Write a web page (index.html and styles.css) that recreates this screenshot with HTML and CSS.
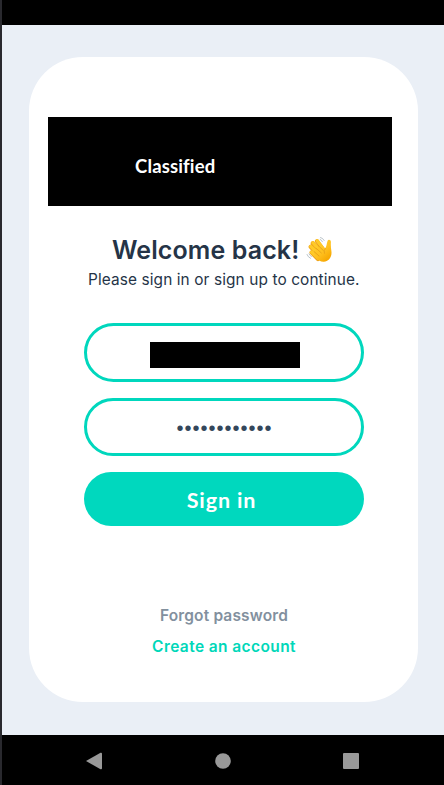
FILE: index.html
```html
<!DOCTYPE html>
<html lang="en">
<head>
<meta charset="utf-8">
<title>Sign in</title>
<link rel="stylesheet" href="styles.css">
</head>
<body>
<div class="device">
  <header class="status-bar"></header>
  <main class="screen">
    <section class="card">
      <div class="banner"><span>Classified</span></div>
      <h1 class="title"><span class="title-text">Welcome back!</span>
        <svg class="wave" viewBox="0 0 28 28" aria-hidden="true">
          <defs><linearGradient id="skin" x1="0" y1="0" x2="0.7" y2="1"><stop offset="0" stop-color="#ffd02c"/><stop offset="0.6" stop-color="#ffc120"/><stop offset="1" stop-color="#f6a600"/></linearGradient></defs>
          <path d="M12 23 5.6 16.5M13 20 4.7 10.8M15 17 6.8 7.2M18 14.5 11 5.2" stroke="#efa41c" stroke-width="4.2" stroke-linecap="round"/>
          <path d="M12.2 22 5.5 16M13.5 19 4.8 10.4M15.5 16.5 7 6.7M18 14 11.3 4.8" stroke="#ffca28" stroke-width="3.2" stroke-linecap="round"/>
          <path d="M8 17 13 10 19 12.5C20.7 10.5 20.5 8.2 21.6 4.8 22.3 2.9 25.1 3.7 24.9 6.2 24.7 9 24.9 12 25.4 15.2 26.2 20.6 22.8 25.6 17.9 25.8 14.5 26 12.4 24.3 8.8 20.7Z" fill="url(#skin)"/>
          <path d="M8.3 15.8 13 20M10 12.2 15.4 17M12.1 9.4 17.4 14.6M19.3 12.5Q17.4 14.4 18.4 17.3" fill="none" stroke="#e59d16" stroke-width=".8" stroke-linecap="round"/>
          <path d="M1 18.5Q1.8 21 4.5 22.3M3 17.8Q3.8 19.7 5.4 20.5M14.5 1.5Q16.8 1.8 18.2 4.5M14.2 3.4Q15.7 4 16.4 5.7" fill="none" stroke="#a8b5bd" stroke-width=".8" stroke-linecap="round"/>
        </svg>
      </h1>
      <p class="subtitle">Please sign in or sign up to continue.</p>
      <form class="form">
        <div class="field"><span class="redacted"></span></div>
        <div class="field"><span class="dots">••••••••••••</span></div>
        <button class="submit" type="button"><span>Sign in</span></button>
      </form>
      <nav class="links">
        <a class="forgot">Forgot password</a>
        <a class="create">Create an account</a>
      </nav>
    </section>
  </main>
  <footer class="nav-bar">
    <svg class="nav-icon" viewBox="0 0 18 18"><path d="M1 9 15.5 .8Q17 .3 17 1.7V16.3Q17 17.7 15.5 17.2Z"/></svg>
    <svg class="nav-icon" viewBox="0 0 18 18"><circle cx="9" cy="9" r="7.8"/></svg>
    <svg class="nav-icon" viewBox="0 0 18 18"><rect x="1" y="1" width="16" height="16" rx="1"/></svg>
  </footer>
</div>
</body>
</html>
```
FILE: styles.css
```css
* { box-sizing: border-box; }
body { margin: 0; background: #29292e; font-family: Inter, "Liberation Sans", sans-serif; }
.device { margin-left: 2px; height: 785px; display: flex; flex-direction: column; overflow: hidden; }
.status-bar { height: 25px; background: #000; }
.screen { height: 710px; padding: 32px 26px 33px 27px; background: #eaeff6; }
.card { height: 645px; padding: 60px 26px 0 19px; border-radius: 54px; background: #fff; color: #253447; }
.banner { height: 89px; background: #000; color: #fff; padding: 37px 0 0 87px; font: 700 18.5px/25px Lato, sans-serif; letter-spacing: .15px; font-variant-ligatures: none; }
.title { margin: 28px 0 0 64px; height: 32px; display: flex; align-items: center; gap: 7px; font-size: 25px; font-weight: 600; line-height: 32px; letter-spacing: .1px; white-space: nowrap; }
.title-text { width: 187px; }
.wave { width: 28px; height: 28px; flex: none; }
.subtitle { margin: 1px 0 0 40px; font-size: 15.4px; font-weight: 400; line-height: 25px; letter-spacing: .11px; white-space: nowrap; }
.form { width: 280px; margin: 31px 0 0 36px; display: flex; flex-direction: column; gap: 16px; }
.field { height: 58px; border: 3px solid #00d7bd; border-radius: 29px; display: flex; align-items: center; justify-content: center; }
.field:first-child { height: 59px; border-radius: 30px; }
.redacted { width: 150px; height: 26px; margin: 4px 0 0 2px; background: #000; }
.dots { font: 20px/24px "Liberation Sans", sans-serif; letter-spacing: 1px; color: #34475b; padding: 2px 0 0 1px; }
.submit { height: 54px; border: 0; border-radius: 27px; background: #00d8be; color: #fff; padding: 2px 5px 0 0; font: 700 21.5px/28px Lato, sans-serif; letter-spacing: .85px; }
.links { width: 280px; margin: 78px 0 0 36px; display: flex; flex-direction: column; align-items: center; gap: 7px; font-size: 15.5px; font-weight: 600; line-height: 24px; }
.forgot { color: #82909e; letter-spacing: .15px; }
.create { color: #00d7b9; letter-spacing: .4px; }
.nav-bar { height: 50px; padding: 1px 84px 0 83px; background: #000; display: flex; align-items: center; justify-content: space-between; }
.nav-icon { width: 18px; height: 18px; fill: #999; }
```
